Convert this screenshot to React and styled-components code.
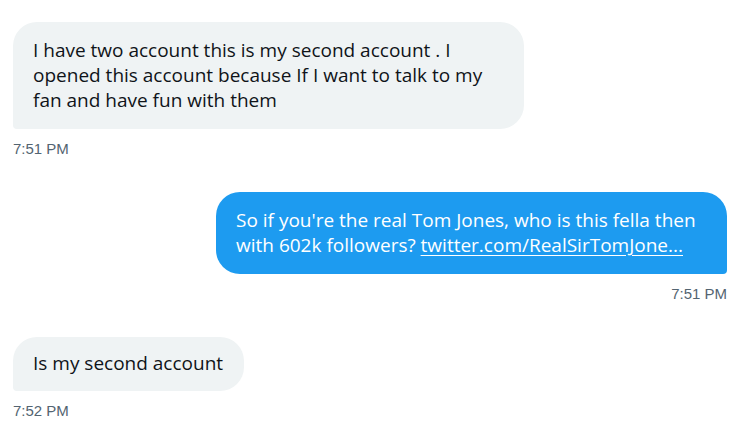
import React from "react";
import styled, { createGlobalStyle } from "styled-components";

const GlobalStyle = createGlobalStyle`
  body {
    margin: 0;
    background: #ffffff;
  }
`;

const Thread = styled.div`
  display: flex;
  flex-direction: column;
  gap: 33px;
  padding: 22px 19px 0 13px;
  width: 746px;
  box-sizing: border-box;
`;

const Group = styled.div`
  display: flex;
  flex-direction: column;
  align-items: ${(p) => (p.$mine ? "flex-end" : "flex-start")};
`;

const Bubble = styled.div`
  box-sizing: border-box;
  width: ${(p) => (p.$wide ? "511px" : "auto")};
  padding: ${(p) => (p.$wide ? "16px 20px" : "14px 21px 15px 20px")};
  border-radius: 24px;
  border-bottom-left-radius: ${(p) => (p.$mine ? "24px" : "4px")};
  border-bottom-right-radius: ${(p) => (p.$mine ? "4px" : "24px")};
  background: ${(p) => (p.$mine ? "#1d9bf0" : "#eff3f4")};
  color: ${(p) => (p.$mine ? "#ffffff" : "#0f1419")};
  font-family: "Open Sans", "Noto Sans", sans-serif;
  font-size: 19px;
  line-height: 25px;
  white-space: nowrap;
`;

const Link = styled.span`
  text-decoration: underline;
  text-underline-offset: 3px;
`;

const Time = styled.div`
  margin-top: 10px;
  font-family: "Liberation Sans", Arial, sans-serif;
  font-size: 15px;
  line-height: 20px;
  color: #536471;
`;

export default function App() {
  return (
    <>
      <GlobalStyle />
      <Thread>
        <Group>
          <Bubble $wide>
            I have two account this is my second account . I<br />
            opened this account because If I want to talk to my<br />
            fan and have fun with them
          </Bubble>
          <Time>7:51 PM</Time>
        </Group>
        <Group $mine>
          <Bubble $mine $wide>
            So if you're the real Tom Jones, who is this fella then<br />
            with 602k followers? <Link>twitter.com/RealSirTomJone...</Link>
          </Bubble>
          <Time>7:51 PM</Time>
        </Group>
        <Group>
          <Bubble>Is my second account</Bubble>
          <Time>7:52 PM</Time>
        </Group>
      </Thread>
    </>
  );
}
